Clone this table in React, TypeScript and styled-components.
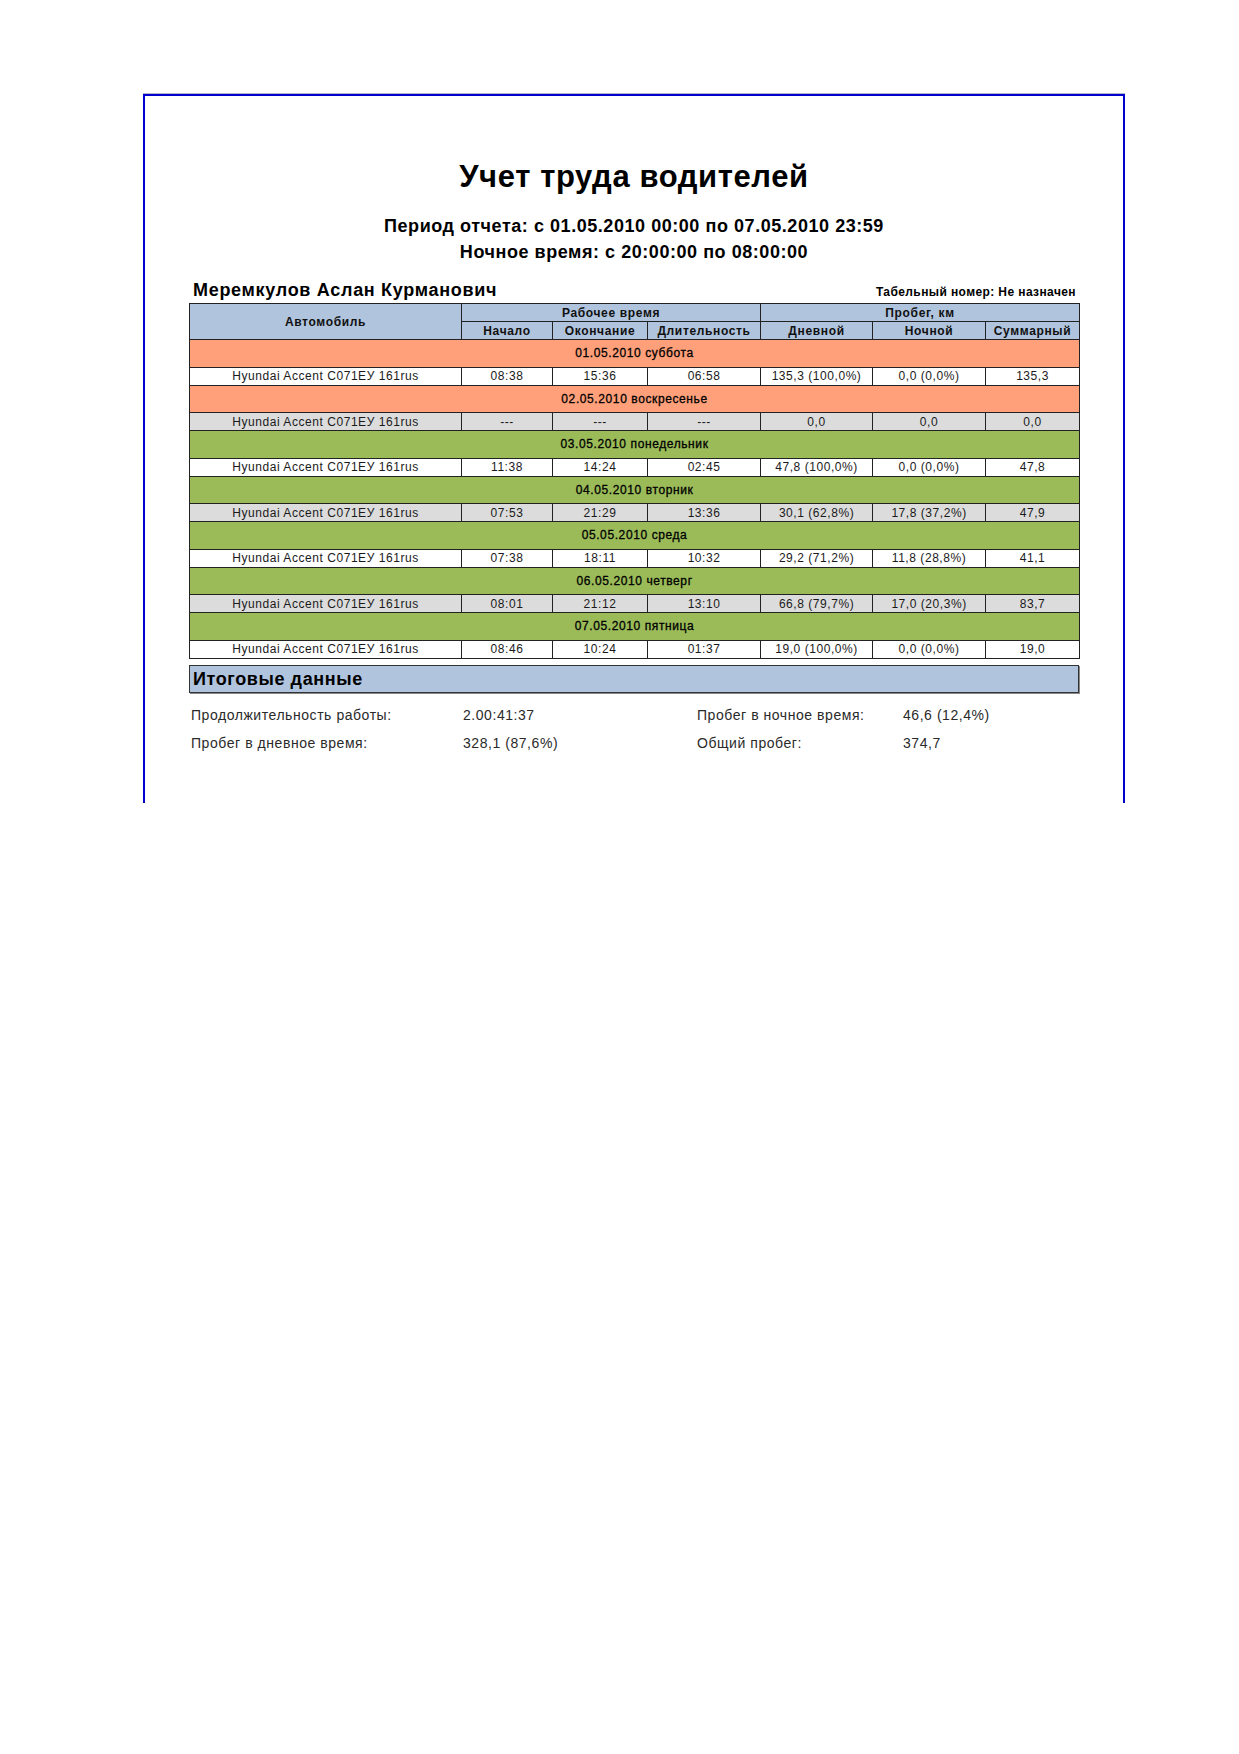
import React from 'react';
import styled, { createGlobalStyle } from 'styled-components';

const GlobalStyle = createGlobalStyle`
    html, body {
        margin: 0;
        padding: 0;
        background: #ffffff;
    }
    body {
        font-family: "Liberation Sans", Arial, sans-serif;
        color: #000;
    }
`;

const Page = styled.div`
    width: 1239px;
    height: 1754px;
    padding-top: 94px;
    box-sizing: border-box;
`;

const Sheet = styled.div`
    margin-left: 143px;
    width: 982px;
    height: 709px;
    box-sizing: border-box;
    border: 2px solid #0000cc;
    border-bottom: none;
    box-shadow: 0 -1px 0 #b4b4c8;
    padding: 63px 44px 0 44px;
`;

const Title = styled.h1`
    margin: 0;
    font-size: 31px;
    line-height: 36px;
    font-weight: bold;
    text-align: center;
    letter-spacing: 0.6px;
`;

const SubTitle = styled.div`
    font-size: 18px;
    line-height: 26px;
    font-weight: bold;
    text-align: center;
    letter-spacing: 0.55px;
`;

const SubBlock = styled.div`
    margin-top: 18px;
`;

const DriverRow = styled.div`
    display: flex;
    justify-content: space-between;
    align-items: flex-end;
    height: 24px;
    margin-top: 12px;
    margin-bottom: 2px;
    padding: 0 3px 0 4px;
`;

const DriverName = styled.div`
    font-size: 18px;
    font-weight: bold;
    line-height: 22px;
    letter-spacing: 0.7px;
`;

const TabNumber = styled.div`
    font-size: 12px;
    font-weight: bold;
    line-height: 16px;
    padding-bottom: 1px;
    letter-spacing: 0.4px;
`;

const Table = styled.table`
    width: 890px;
    table-layout: fixed;
    border-collapse: collapse;
    font-size: 12px;
`;

const HeadCell = styled.th`
    background: #b0c4de;
    border: 1px solid #222;
    height: 17px;
    padding: 0;
    font-weight: bold;
    font-size: 12px;
    letter-spacing: 0.65px;
    text-align: center;
    color: #111;
`;

const DayRow = styled.tr<{ $tone: 'weekend' | 'work' }>`
    background: ${(p) => (p.$tone === 'weekend' ? '#ffa07a' : '#9bbb59')};
`;

const DayCell = styled.td`
    border: 1px solid #222;
    height: 26.5px;
    padding: 0;
    text-align: center;
    font-weight: normal;
    font-size: 12px;
    letter-spacing: 0.6px;
    color: #000;
    -webkit-text-stroke: 0.3px #000;
`;

const TripRow = styled.tr<{ $shade: boolean }>`
    background: ${(p) => (p.$shade ? '#dcdcdc' : '#ffffff')};
`;

const Cell = styled.td`
    border: 1px solid #222;
    height: 17px;
    padding: 0;
    text-align: center;
    font-size: 12px;
    letter-spacing: 0.55px;
    color: #1a1a1a;
    white-space: nowrap;
    overflow: hidden;
`;

const TotalsHeader = styled.div`
    margin-top: 6px;
    width: 890px;
    height: 28px;
    box-sizing: border-box;
    background: #b0c4de;
    border: 1px solid #333;
    box-shadow: 1px 1px 0 #888;
    padding-left: 3px;
    font-size: 18px;
    font-weight: bold;
    line-height: 26px;
    letter-spacing: 0.6px;
`;

const TotalsGrid = styled.div`
    display: grid;
    grid-template-columns: 272px 234px 206px 1fr;
    grid-auto-rows: 28px;
    margin-top: 8px;
    padding-left: 2px;
    font-size: 14px;
    line-height: 28px;
    letter-spacing: 0.55px;
    color: #2a2a2a;
`;

type Trip = {
    date: string;
    tone: 'weekend' | 'work';
    start: string;
    end: string;
    duration: string;
    day: string;
    night: string;
    total: string;
    shade: boolean;
};

const car = 'Hyundai Accent C071EУ 161rus';

const trips: Trip[] = [
    { date: '01.05.2010 суббота', tone: 'weekend', start: '08:38', end: '15:36', duration: '06:58', day: '135,3 (100,0%)', night: '0,0 (0,0%)', total: '135,3', shade: false },
    { date: '02.05.2010 воскресенье', tone: 'weekend', start: '---', end: '---', duration: '---', day: '0,0', night: '0,0', total: '0,0', shade: true },
    { date: '03.05.2010 понедельник', tone: 'work', start: '11:38', end: '14:24', duration: '02:45', day: '47,8 (100,0%)', night: '0,0 (0,0%)', total: '47,8', shade: false },
    { date: '04.05.2010 вторник', tone: 'work', start: '07:53', end: '21:29', duration: '13:36', day: '30,1 (62,8%)', night: '17,8 (37,2%)', total: '47,9', shade: true },
    { date: '05.05.2010 среда', tone: 'work', start: '07:38', end: '18:11', duration: '10:32', day: '29,2 (71,2%)', night: '11,8 (28,8%)', total: '41,1', shade: false },
    { date: '06.05.2010 четверг', tone: 'work', start: '08:01', end: '21:12', duration: '13:10', day: '66,8 (79,7%)', night: '17,0 (20,3%)', total: '83,7', shade: true },
    { date: '07.05.2010 пятница', tone: 'work', start: '08:46', end: '10:24', duration: '01:37', day: '19,0 (100,0%)', night: '0,0 (0,0%)', total: '19,0', shade: false },
];

const widths = [272, 91, 95, 113, 112, 113, 94];

export default function App() {
    return (
        <Page>
            <GlobalStyle />
            <Sheet>
                <Title>Учет труда водителей</Title>
                <SubBlock>
                    <SubTitle>Период отчета: с 01.05.2010 00:00 по 07.05.2010 23:59</SubTitle>
                    <SubTitle>Ночное время: с 20:00:00 по 08:00:00</SubTitle>
                </SubBlock>
                <DriverRow>
                    <DriverName>Меремкулов Аслан Курманович</DriverName>
                    <TabNumber>Табельный номер: Не назначен</TabNumber>
                </DriverRow>
                <Table>
                    <colgroup>
                        {widths.map((w, i) => (
                            <col key={i} style={{ width: w }} />
                        ))}
                    </colgroup>
                    <thead>
                        <tr>
                            <HeadCell rowSpan={2}>Автомобиль</HeadCell>
                            <HeadCell colSpan={3}>Рабочее время</HeadCell>
                            <HeadCell colSpan={3}>Пробег, км</HeadCell>
                        </tr>
                        <tr>
                            <HeadCell>Начало</HeadCell>
                            <HeadCell>Окончание</HeadCell>
                            <HeadCell>Длительность</HeadCell>
                            <HeadCell>Дневной</HeadCell>
                            <HeadCell>Ночной</HeadCell>
                            <HeadCell>Суммарный</HeadCell>
                        </tr>
                    </thead>
                    <tbody>
                        {trips.map((t) => (
                            <React.Fragment key={t.date}>
                                <DayRow $tone={t.tone}>
                                    <DayCell colSpan={7}>{t.date}</DayCell>
                                </DayRow>
                                <TripRow $shade={t.shade}>
                                    <Cell>{car}</Cell>
                                    <Cell>{t.start}</Cell>
                                    <Cell>{t.end}</Cell>
                                    <Cell>{t.duration}</Cell>
                                    <Cell>{t.day}</Cell>
                                    <Cell>{t.night}</Cell>
                                    <Cell>{t.total}</Cell>
                                </TripRow>
                            </React.Fragment>
                        ))}
                    </tbody>
                </Table>
                <TotalsHeader>Итоговые данные</TotalsHeader>
                <TotalsGrid>
                    <span>Продолжительность работы:</span>
                    <span>2.00:41:37</span>
                    <span>Пробег в ночное время:</span>
                    <span>46,6 (12,4%)</span>
                    <span>Пробег в дневное время:</span>
                    <span>328,1 (87,6%)</span>
                    <span>Общий пробег:</span>
                    <span>374,7</span>
                </TotalsGrid>
            </Sheet>
        </Page>
    );
}
